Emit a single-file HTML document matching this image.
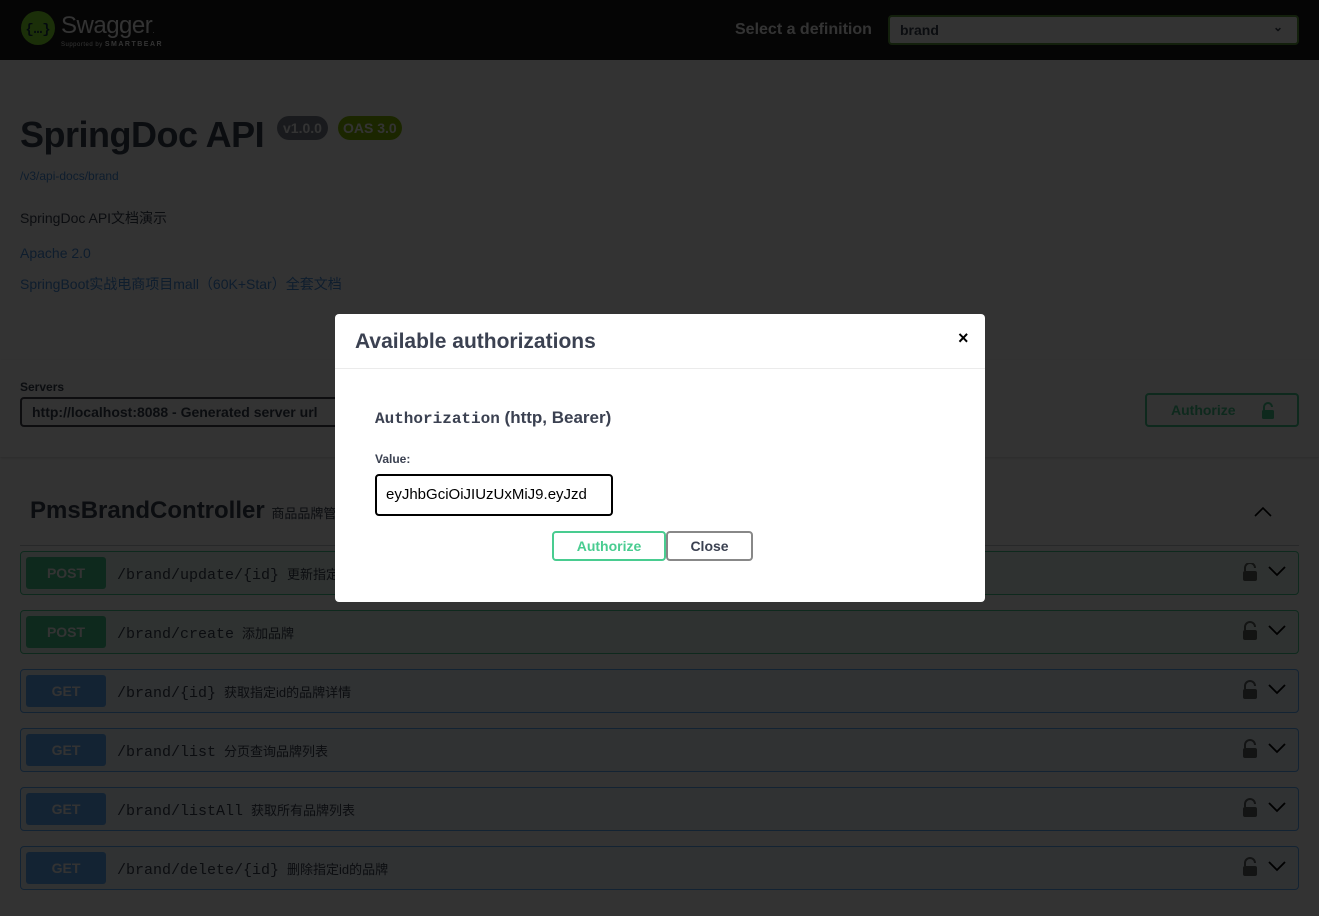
<!DOCTYPE html>
<html><head><meta charset="utf-8">
<style>
*{box-sizing:border-box;margin:0;padding:0}
body{width:1319px;height:916px;overflow:hidden;background:#fff;font-family:"Liberation Sans","Noto Sans CJK SC",sans-serif;color:#3b4151;position:relative}
.a{position:absolute}
.hdr{left:0;top:0;width:1319px;height:60px;background:#1b1b1b}
.mono{font-family:"Liberation Mono","Noto Sans CJK SC",monospace;font-weight:bold}
.op{left:20px;width:1279px;height:44px;border-radius:4px;border:1px solid}
.post{background:rgba(73,204,144,.1);border-color:#49cc90}
.get{background:rgba(97,175,254,.1);border-color:#61affe}
.m{position:absolute;left:5px;top:5px;width:80px;height:32px;border-radius:3px;color:#fff;font-weight:bold;font-size:14px;text-align:center;line-height:32px}
.post .m{background:#49cc90}.get .m{background:#61affe}
.path{position:absolute;left:96px;top:12px;font-size:15px;font-weight:normal;color:#3b4151;white-space:nowrap}
.path span{font-family:"Liberation Sans","Noto Sans CJK SC",sans-serif;font-weight:normal;font-size:13px;margin-left:8px}
.ov{left:0;top:0;width:1319px;height:916px;background:rgba(0,0,0,.8)}
</style></head><body>
<div class="a hdr"></div>
<svg class="a" style="left:20px;top:10px" width="36" height="36" viewBox="0 0 36 36"><circle cx="18" cy="18" r="17" fill="#85ea2d"/><text x="18" y="23" font-size="14" text-anchor="middle" fill="#173647" font-family="Liberation Mono" font-weight="bold">{…}</text></svg>
<div class="a" style="left:61px;top:12px;font-size:24px;color:#fff;letter-spacing:-0.5px">Swagger<span style="font-size:8px">.</span></div>
<div class="a" style="left:61px;top:41px;font-size:6px;color:#fff;letter-spacing:.5px">Supported by <b style="font-size:7px;letter-spacing:1.5px">SMARTBEAR</b></div>
<div class="a" style="left:735px;top:21px;font-size:16px;font-weight:bold;color:#fff">Select a definition</div>
<div class="a" style="left:888px;top:15px;width:411px;height:30px;border:2px solid #62a03f;border-radius:4px;background:#fff;font-size:14px;font-weight:bold;padding:5px 10px;color:#3b4151">brand<span style="position:absolute;right:14px;top:3px;font-size:12px">⌄</span></div>

<div class="a" style="left:20px;top:114px;font-size:36px;font-weight:bold;letter-spacing:-0.5px">SpringDoc API</div>
<div class="a" style="left:277px;top:116px;height:24px;padding:0 6px;border-radius:57px;background:#7d8492;color:#fff;font-size:14px;font-weight:bold;line-height:24px">v1.0.0</div>
<div class="a" style="left:338px;top:116px;height:24px;padding:0 5px;border-radius:57px;background:#89bf04;color:#fff;font-size:14px;font-weight:bold;line-height:24px">OAS 3.0</div>
<div class="a" style="left:20px;top:169px;font-size:12px;color:#4990e2">/v3/api-docs/brand</div>
<div class="a" style="left:20px;top:208px;font-size:14px">SpringDoc API文档演示</div>
<div class="a" style="left:20px;top:245px;font-size:14px;color:#4990e2">Apache 2.0</div>
<div class="a" style="left:20px;top:274px;font-size:14px;color:#4990e2">SpringBoot实战电商项目mall（60K+Star）全套文档</div>

<div class="a" style="left:0;top:360px;width:1319px;height:97px;background:#fff;box-shadow:0 1px 2px rgba(0,0,0,.15)"></div>
<div class="a" style="left:20px;top:380px;font-size:12px;font-weight:bold">Servers</div>
<div class="a" style="left:20px;top:397px;width:330px;height:30px;border:2px solid #41444e;border-radius:4px;font-size:14px;font-weight:bold;padding:5px 10px;white-space:nowrap;overflow:hidden">http://localhost:8088 - Generated server url</div>
<div class="a" style="left:1145px;top:393px;width:154px;height:34px;border:2px solid #49cc90;border-radius:4px;color:#49cc90;font-size:14px;font-weight:bold;line-height:30px;padding-left:24px">Authorize
<svg style="position:absolute;right:22px;top:7px" width="14" height="18" viewBox="0 0 14 18"><path d="M3 8V5a4 4 0 0 1 8 0" fill="none" stroke="#49cc90" stroke-width="2"/><rect x="1" y="8" width="12" height="9" rx="1.5" fill="#49cc90"/></svg></div>

<div class="a" style="left:30px;top:497px;font-size:24px;font-weight:bold;white-space:nowrap">PmsBrandController <span style="font-size:13px;font-weight:normal">商品品牌管理</span></div>
<svg class="a" style="left:1254px;top:505px" width="18" height="12"><path d="M1 11L9 3l8 8" fill="none" stroke="#000" stroke-width="1.6"/></svg>
<div class="a" style="left:20px;top:545px;width:1279px;height:1px;background:rgba(59,65,81,.3)"></div>

<div class="a op post" style="top:551px"><div class="m">POST</div><div class="path mono">/brand/update/{id}<span>更新指定id品牌信息</span></div></div>
<div class="a op post" style="top:610px"><div class="m">POST</div><div class="path mono">/brand/create<span>添加品牌</span></div></div>
<div class="a op get" style="top:669px"><div class="m">GET</div><div class="path mono">/brand/{id}<span>获取指定id的品牌详情</span></div></div>
<div class="a op get" style="top:728px"><div class="m">GET</div><div class="path mono">/brand/list<span>分页查询品牌列表</span></div></div>
<div class="a op get" style="top:787px"><div class="m">GET</div><div class="path mono">/brand/listAll<span>获取所有品牌列表</span></div></div>
<div class="a op get" style="top:846px"><div class="m">GET</div><div class="path mono">/brand/delete/{id}<span>删除指定id的品牌</span></div></div>

<svg class="a" style="left:1242px;top:563px" width="60" height="320">
<g id="r"><path d="M3 8V5a5 5 0 0 1 10 0" fill="none" stroke="#000" stroke-width="2" opacity=".6"/><rect x="1" y="8" width="14" height="10" rx="2" fill="#000" opacity=".6"/><path d="M27 4l8 8 8-8" fill="none" stroke="#000" stroke-width="1.8"/></g>
<use href="#r" y="59"/><use href="#r" y="118"/><use href="#r" y="177"/><use href="#r" y="236"/><use href="#r" y="295"/>
</svg>

<div class="a ov"></div>

<div class="a" style="left:335px;top:314px;width:650px;height:288px;background:#fff;border-radius:4px">
<div class="a" style="left:20px;top:16px;font-size:21px;font-weight:bold;color:#3b4151">Available authorizations</div>
<div class="a" style="left:623px;top:14px;font-size:18px;font-weight:bold;color:#000">×</div>
<div class="a" style="left:0;top:54px;width:650px;height:1px;background:#ebebeb"></div>
<div class="a" style="left:40px;top:94px;font-size:17px;font-weight:bold;white-space:nowrap"><span class="mono" style="font-size:16px">Authorization</span> (http, Bearer)</div>
<div class="a" style="left:40px;top:138px;font-size:12px;font-weight:bold">Value:</div>
<div class="a" style="left:40px;top:160px;width:238px;height:42px;border:2px solid #000;border-radius:4px;font-size:15px;padding:10px 9px;overflow:hidden;white-space:nowrap;color:#000">eyJhbGciOiJIUzUxMiJ9.eyJzd</div>
<div class="a" style="left:217px;top:217px;width:114px;height:30px;border:2px solid #49cc90;border-radius:4px;color:#49cc90;font-size:14px;font-weight:bold;text-align:center;line-height:26px">Authorize</div>
<div class="a" style="left:331px;top:217px;width:87px;height:30px;border:2px solid #888;border-radius:4px;color:#3b4151;font-size:14px;font-weight:bold;text-align:center;line-height:27px">Close</div>
</div>
</body></html>
